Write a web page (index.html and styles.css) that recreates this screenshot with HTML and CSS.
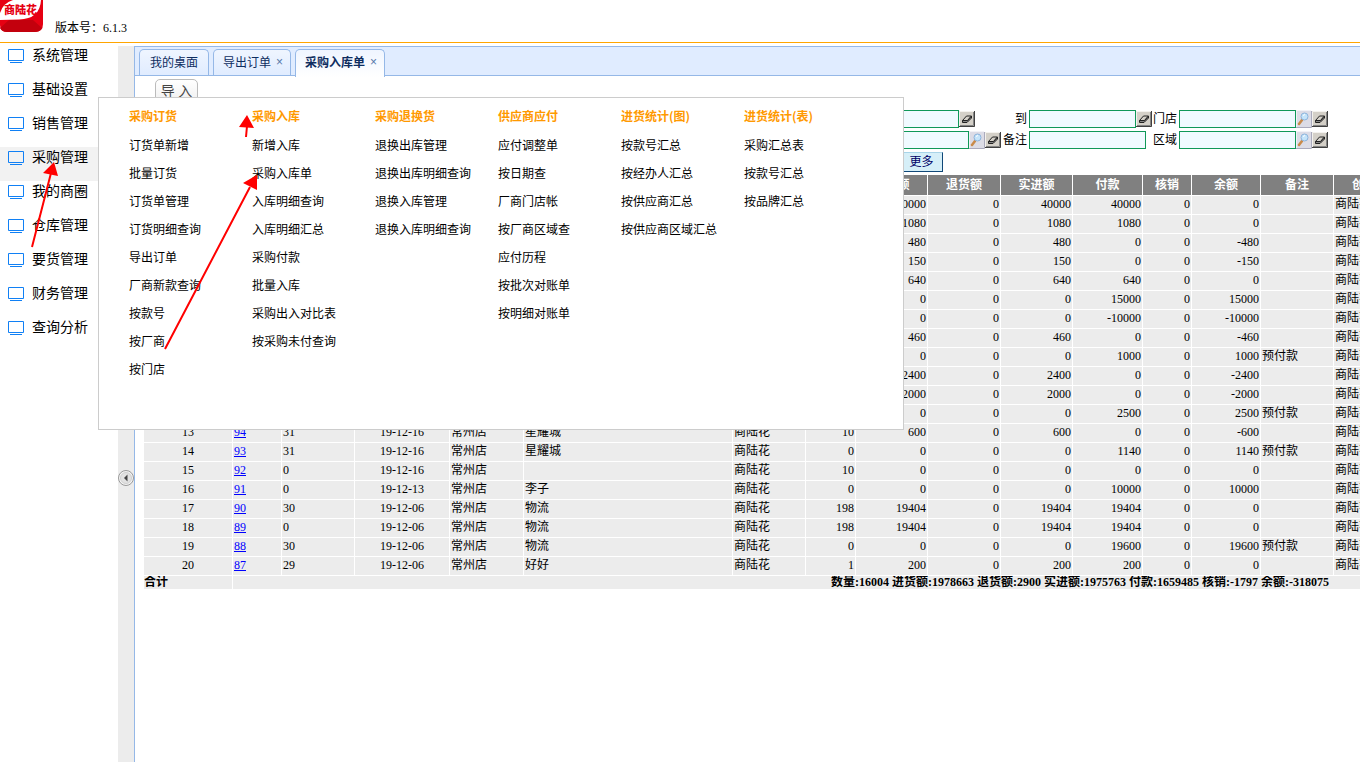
FILE: index.html
```html
<!DOCTYPE html>
<html lang="zh-CN">
<head>
    <meta charset="UTF-8">
    <meta name="viewport" content="width=device-width, initial-scale=1.0">
    <title>商陆花 - 采购入库单</title>
    <link rel="stylesheet" href="styles.css">
</head>
<body>
    <svg class="defs" aria-hidden="true">
        <symbol id="icon-screen" viewBox="0 0 16 14">
            <path d="M.5.5h15v11H.5z M2 13.5h12" fill="none" stroke="#1080f5"/>
        </symbol>
        <symbol id="icon-eraser" viewBox="0 0 16 16">
            <path d="M0 0h16v16H0z" fill="#d4d0c8"/>
            <path d="M.5 15.5V.5h15" fill="none" stroke="#f4f2ee"/>
            <path d="M0 15.5h15.5V0" fill="none" stroke="#404040"/>
            <path d="M1 14.5h13.5V1" fill="none" stroke="#858585"/>
            <path d="M3.5 9.5l4-4.500h5l-4 4.500z" fill="#d4d0c8" stroke="#222"/>
            <path d="M3.500 9.500v2h4.500l4.500-4.500V5l-4 4.500z" fill="#888" stroke="#222"/>
        </symbol>
        <symbol id="icon-search" viewBox="0 0 16 18">
            <path d="M0 0h15v17H0z" fill="#dcdce6"/>
            <path d="M.5 17V.5H15" fill="none" stroke="#f2f2f7"/>
            <path d="M0 17.500h15.500V1" fill="none" stroke="#aaaabc"/>
            <path d="M3 14l3-4" stroke="#c98a4a" stroke-width="2.500" stroke-linecap="round"/>
            <circle cx="8.500" cy="6.500" r="3.500" fill="#c4e4fa" stroke="#8db4dc"/>
            <path d="M7 5.500l2-1" stroke="#fff"/>
        </symbol>
    </svg>

    <header class="top">
        <svg class="logo" viewBox="0 0 43 32" role="img" aria-label="商陆花">
            <path d="M0 0h43v24q0 8-8 8H7q-7 0-7-7z" fill="#e60012"/>
            <path d="M0 28L9 20h24l9 8q-2 4-8 4H7q-5 0-7-4z" fill="#c3000d"/>
            <path d="M0 0h41q-1 19-22 19.500L0 20z" fill="#fff"/>
            <path d="M0 0h13Q3 3 0 13z" fill="#e60012"/>
            <text class="logo-text" x="4" y="14">商陆花</text>
        </svg>
        <span class="version">版本号：6.1.3</span>
    </header>

    <div class="page">
        <nav class="sidebar">
            <a href="#"><svg><use href="#icon-screen"/></svg>系统管理</a>
            <a href="#"><svg><use href="#icon-screen"/></svg>基础设置</a>
            <a href="#"><svg><use href="#icon-screen"/></svg>销售管理</a>
            <a href="#" class="active"><svg><use href="#icon-screen"/></svg>采购管理</a>
            <a href="#"><svg><use href="#icon-screen"/></svg>我的商圈</a>
            <a href="#"><svg><use href="#icon-screen"/></svg>仓库管理</a>
            <a href="#"><svg><use href="#icon-screen"/></svg>要货管理</a>
            <a href="#"><svg><use href="#icon-screen"/></svg>财务管理</a>
            <a href="#"><svg><use href="#icon-screen"/></svg>查询分析</a>
        </nav>

        <div class="splitter">
            <button class="collapse" aria-label="收起">
                <svg viewBox="0 0 16 16"><circle cx="8" cy="8" r="7.500" fill="#f4f4f4" stroke="#999"/><circle cx="8" cy="8" r="5.500" fill="#e2e2e2" stroke="#d0d0d0"/><path d="M9.500 4.500v7L6 8z" fill="#444"/></svg>
            </button>
        </div>

        <main class="main">
            <div class="tabs">
                <a href="#" class="tab">我的桌面</a>
                <a href="#" class="tab closable">导出订单<span class="close">×</span></a>
                <a href="#" class="tab closable selected">采购入库单<span class="close">×</span></a>
            </div>

            <div class="content">
                <button class="import">导 入</button>

                <form class="filters">
                    <label for="date-from">日期</label>
                    <div class="field date">
                        <input id="date-from" type="text">
                        <button type="button" aria-label="清除"><svg class="eraser"><use href="#icon-eraser"/></svg></button>
                    </div>
                    <label for="date-to">到</label>
                    <div class="field date">
                        <input id="date-to" type="text">
                        <button type="button" aria-label="清除"><svg class="eraser"><use href="#icon-eraser"/></svg></button>
                    </div>
                    <label for="shop">门店</label>
                    <div class="field">
                        <input id="shop" type="text">
                        <button type="button" aria-label="查找"><svg class="search"><use href="#icon-search"/></svg></button>
                        <button type="button" aria-label="清除"><svg class="eraser"><use href="#icon-eraser"/></svg></button>
                    </div>

                    <label for="supplier">厂商</label>
                    <div class="field">
                        <input id="supplier" type="text">
                        <button type="button" aria-label="查找"><svg class="search"><use href="#icon-search"/></svg></button>
                        <button type="button" aria-label="清除"><svg class="eraser"><use href="#icon-eraser"/></svg></button>
                    </div>
                    <label for="remark">备注</label>
                    <div class="field">
                        <input id="remark" type="text">
                    </div>
                    <label for="area">区域</label>
                    <div class="field">
                        <input id="area" type="text">
                        <button type="button" aria-label="查找"><svg class="search"><use href="#icon-search"/></svg></button>
                        <button type="button" aria-label="清除"><svg class="eraser"><use href="#icon-eraser"/></svg></button>
                    </div>
                </form>
                <div class="actions">
                    <button class="more">更多</button>
                </div>

                <table class="grid">
                    <colgroup>
                        <col class="w-no"><col class="w-s"><col class="w-m"><col class="w-date"><col class="w-shop"><col class="w-name"><col class="w-m"><col class="w-qty">
                        <col class="w-sum"><col class="w-m"><col class="w-sum"><col class="w-pay"><col class="w-s"><col class="w-left"><col class="w-m"><col class="w-m">
                    </colgroup>
                    <thead>
                        <tr>
                            <th>序号</th><th>批次</th><th>订货号</th><th>日期</th><th>门店</th><th>厂商</th><th>经办人</th><th>数量</th>
                            <th>进货额</th><th>退货额</th><th>实进额</th><th>付款</th><th>核销</th><th>余额</th><th>备注</th><th>创建人</th>
                        </tr>
                    </thead>
                    <tbody id="rows"></tbody>
                    <tfoot>
                        <tr>
                            <td>合计</td>
                            <td colspan="14" class="total">数量:16004 进货额:1978663 退货额:2900 实进额:1975763 付款:1659485 核销:-1797 余额:-318075</td>
                            <td></td>
                        </tr>
                    </tfoot>
                </table>
            </div>
        </main>
    </div>

    <div class="menu">
        <ul>
            <li class="title">采购订货</li>
            <li><a href="#">订货单新增</a></li>
            <li><a href="#">批量订货</a></li>
            <li><a href="#">订货单管理</a></li>
            <li><a href="#">订货明细查询</a></li>
            <li><a href="#">导出订单</a></li>
            <li><a href="#">厂商新款查询</a></li>
            <li><a href="#">按款号</a></li>
            <li><a href="#">按厂商</a></li>
            <li><a href="#">按门店</a></li>
        </ul>
        <ul>
            <li class="title">采购入库</li>
            <li><a href="#">新增入库</a></li>
            <li><a href="#">采购入库单</a></li>
            <li><a href="#">入库明细查询</a></li>
            <li><a href="#">入库明细汇总</a></li>
            <li><a href="#">采购付款</a></li>
            <li><a href="#">批量入库</a></li>
            <li><a href="#">采购出入对比表</a></li>
            <li><a href="#">按采购未付查询</a></li>
        </ul>
        <ul>
            <li class="title">采购退换货</li>
            <li><a href="#">退换出库管理</a></li>
            <li><a href="#">退换出库明细查询</a></li>
            <li><a href="#">退换入库管理</a></li>
            <li><a href="#">退换入库明细查询</a></li>
        </ul>
        <ul>
            <li class="title">供应商应付</li>
            <li><a href="#">应付调整单</a></li>
            <li><a href="#">按日期查</a></li>
            <li><a href="#">厂商门店帐</a></li>
            <li><a href="#">按厂商区域查</a></li>
            <li><a href="#">应付历程</a></li>
            <li><a href="#">按批次对账单</a></li>
            <li><a href="#">按明细对账单</a></li>
        </ul>
        <ul>
            <li class="title">进货统计(图)</li>
            <li><a href="#">按款号汇总</a></li>
            <li><a href="#">按经办人汇总</a></li>
            <li><a href="#">按供应商汇总</a></li>
            <li><a href="#">按供应商区域汇总</a></li>
        </ul>
        <ul>
            <li class="title">进货统计(表)</li>
            <li><a href="#">采购汇总表</a></li>
            <li><a href="#">按款号汇总</a></li>
            <li><a href="#">按品牌汇总</a></li>
        </ul>
    </div>

    <!-- guide arrows -->
    <svg class="arrows" viewBox="0 0 300 400" aria-hidden="true">
        <path d="M32 247L51 173M165 349L250 187M246 137l1-11" stroke="#f00" stroke-width="2"/>
        <path d="M54 162l-11 11 15 3zM257 175l-14 8 14 7zM247 115l-8 12 15 1z" fill="#f00"/>
    </svg>

    <script>
        // batch, order, date, shop, supplier, staff, qty, in, return, net, paid, written off, balance, remark
        const rows = [
            ['', '', '', '', '', '', '', 40000, 0, 40000, 40000, 0, 0, ''],
            ['', '', '', '', '', '', '', 1080, 0, 1080, 1080, 0, 0, ''],
            ['', '', '', '', '', '', '', 480, 0, 480, 0, 0, -480, ''],
            ['', '', '', '', '', '', '', 150, 0, 150, 0, 0, -150, ''],
            ['', '', '', '', '', '', '', 640, 0, 640, 640, 0, 0, ''],
            ['', '', '', '', '', '', '', 0, 0, 0, 15000, 0, 15000, ''],
            ['', '', '', '', '', '', '', 0, 0, 0, -10000, 0, -10000, ''],
            ['', '', '', '', '', '', '', 460, 0, 460, 0, 0, -460, ''],
            ['', '', '', '', '', '', '', 0, 0, 0, 1000, 0, 1000, '预付款'],
            ['', '', '', '', '', '', '', 2400, 0, 2400, 0, 0, -2400, ''],
            ['', '', '', '', '', '', '', 2000, 0, 2000, 0, 0, -2000, ''],
            ['', '', '', '', '', '', '', 0, 0, 0, 2500, 0, 2500, '预付款'],
            [94, 31, '19-12-16', '常州店', '星耀城', '商陆花', 10, 600, 0, 600, 0, 0, -600, ''],
            [93, 31, '19-12-16', '常州店', '星耀城', '商陆花', 0, 0, 0, 0, 1140, 0, 1140, '预付款'],
            [92, 0, '19-12-16', '常州店', '', '商陆花', 10, 0, 0, 0, 0, 0, 0, ''],
            [91, 0, '19-12-13', '常州店', '李子', '商陆花', 0, 0, 0, 0, 10000, 0, 10000, ''],
            [90, 30, '19-12-06', '常州店', '物流', '商陆花', 198, 19404, 0, 19404, 19404, 0, 0, ''],
            [89, 0, '19-12-06', '常州店', '物流', '商陆花', 198, 19404, 0, 19404, 19404, 0, 0, ''],
            [88, 30, '19-12-06', '常州店', '物流', '商陆花', 0, 0, 0, 0, 19600, 0, 19600, '预付款'],
            [87, 29, '19-12-06', '常州店', '好好', '商陆花', 1, 200, 0, 200, 200, 0, 0, '']
        ];

        document.getElementById('rows').innerHTML = rows.map((row, i) => {
            const cells = row.map((value, col) => {
                if (col === 0) return `<td><a href="#">${value}</a></td>`;
                if (col === 2) return `<td class="center">${value}</td>`;
                if (col >= 6 && col <= 12) return `<td class="num">${value}</td>`;
                return `<td>${value}</td>`;
            }).join('');
            return `<tr><td class="center">${i + 1}</td>${cells}<td>商陆花</td></tr>`;
        }).join('');
    </script>
</body>
</html>
```

FILE: styles.css
```css
* {
    box-sizing: border-box;
}
body {
    margin: 0;
    min-height: 100vh;
    display: flex;
    flex-direction: column;
    position: relative;
    overflow-x: hidden;
    background: #fff;
    color: #000;
    font-family: "Liberation Serif", "Noto Sans CJK SC", serif;
    font-size: 12px;
}
a {
    color: inherit;
    text-decoration: none;
}
button {
    font-family: inherit;
    padding: 0;
    border: 0;
    background: none;
}
svg {
    display: block;
}
.defs {
    position: absolute;
    width: 0;
    height: 0;
}

/* header */
.top {
    display: flex;
    height: 43px;
    gap: 12px;
    border-bottom: 1px solid #ffa500;
}
.logo {
    width: 43px;
    height: 32px;
}
.logo-text {
    font: 900 11px "Noto Sans CJK SC", sans-serif;
    fill: #e60012;
}
.version {
    padding-top: 18px;
    line-height: 20px;
}

.page {
    flex: 1;
    display: flex;
}

/* sidebar */
.sidebar {
    width: 118px;
    padding-top: 2px;
    font-family: "Noto Sans CJK SC", sans-serif;
    font-size: 14px;
}
.sidebar a {
    display: flex;
    gap: 8px;
    width: 98px;
    height: 34px;
    padding-left: 8px;
    line-height: 18px;
}
.sidebar a.active {
    background: #f2f2f2;
}
.sidebar svg {
    width: 16px;
    height: 14px;
    margin-top: 4px;
}
.splitter {
    width: 16px;
    margin-top: 3px;
    padding-top: 424px;
    background: #ececec;
}
.collapse svg {
    width: 16px;
    height: 16px;
}

/* tabs */
.main {
    flex: 1;
    min-width: 0;
    margin-top: 3px;
    overflow: hidden;
    border-left: 1px solid #95b8e7;
}
.tabs {
    display: flex;
    gap: 4px;
    height: 30px;
    padding: 2px 4px 0;
    background: #e0ecff;
    border-top: 1px solid #95b8e7;
    border-bottom: 1px solid #95b8e7;
}
.tab {
    display: flex;
    height: 26px;
    padding: 0 10px;
    line-height: 24px;
    white-space: nowrap;
    color: #0e2d5f;
    font-family: "Noto Sans CJK SC", sans-serif;
    border: 1px solid #95b8e7;
    border-bottom: 0;
    border-radius: 5px 5px 0 0;
    background: linear-gradient(#eff5ff, #e0ecff);
}
.tab.closable {
    gap: 5px;
    padding: 0 7px 0 9px;
}
.tab .close {
    color: #5577aa;
    font-family: "Liberation Sans", sans-serif;
    font-weight: normal;
}
.tab.selected {
    height: 28px;
    font-weight: bold;
    background: linear-gradient(#eff5ff, #fff);
}

/* filters */
.content {
    padding: 3px 0 0 9px;
}
.import {
    display: block;
    width: 43px;
    height: 26px;
    margin-left: 11px;
    color: #444;
    font-size: 14px;
    line-height: 22px;
    border: 1px solid #bbb;
    border-radius: 5px;
    background: linear-gradient(#fff, #eee);
}
.filters {
    display: grid;
    grid-template-columns: 708px 149px 28px 122px 28px 149px;
    grid-auto-rows: 18px;
    row-gap: 3px;
    margin-top: 5px;
}
.filters label {
    padding-right: 2px;
    line-height: 18px;
    text-align: right;
}
.field {
    display: flex;
    align-items: center;
}
.field input {
    width: 117px;
    height: 18px;
    padding: 0 2px;
    border: 1px solid #109858;
    background: #f0faff;
}
.field.date input {
    width: 107px;
}
.eraser {
    width: 16px;
    height: 16px;
}
.search {
    width: 16px;
    height: 18px;
}
.actions {
    display: flex;
    padding: 3px 0 3px 756px;
}
.more {
    width: 43px;
    height: 20px;
    color: #000066;
    font-size: 12px;
    line-height: 16px;
    border: 1px solid #a8d4e8;
    border-right-color: #104878;
    border-bottom-color: #104878;
    background: #d6eff8;
}

/* table */
.grid {
    width: 1263px;
    table-layout: fixed;
    border-collapse: separate;
    border-spacing: 0;
}
.w-no { width: 89px; }
.w-s { width: 49px; }
.w-m { width: 73px; }
.w-date { width: 95px; }
.w-shop { width: 74px; }
.w-name { width: 209px; }
.w-qty { width: 50px; }
.w-sum { width: 72px; }
.w-pay { width: 70px; }
.w-left { width: 69px; }
.grid th,
.grid td {
    height: 19px;
    padding: 0 1px;
    line-height: 16px;
    overflow: hidden;
    white-space: nowrap;
    text-align: left;
    vertical-align: top;
    border-right: 1px solid #fff;
    border-bottom: 1px solid #fff;
    background: #ececec;
}
.grid th {
    height: 21px;
    line-height: 20px;
    color: #fff;
    text-align: center;
    background: #808080;
}
.grid td a {
    color: #0000ff;
    text-decoration: underline;
}
.grid .center {
    text-align: center;
}
.grid .num {
    text-align: right;
}
.grid tfoot td {
    height: 13px;
    padding: 0;
    line-height: 13px;
    font-weight: bold;
    border-bottom: 0;
}
.grid tfoot .total {
    padding-right: 5px;
    text-align: right;
    border-right: 0;
}

/* purchase menu */
.menu {
    position: absolute;
    top: 97px;
    left: 98px;
    display: flex;
    width: 806px;
    height: 333px;
    padding: 5px 30px;
    font-family: "Noto Sans CJK SC", sans-serif;
    border: 1px solid #ccc;
    background: #fff;
}
.menu ul {
    width: 123px;
    margin: 0;
    padding: 0;
    list-style: none;
}
.menu li {
    line-height: 28px;
    white-space: nowrap;
}
.menu .title {
    margin-bottom: 2px;
    color: #ff9900;
    font-weight: bold;
    line-height: 26px;
}
.arrows {
    position: absolute;
    top: 0;
    left: 0;
    width: 300px;
    height: 400px;
    pointer-events: none;
}
```
